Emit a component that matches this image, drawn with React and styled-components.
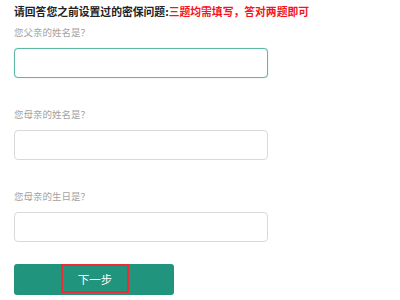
import React from "react";
import styled, { createGlobalStyle } from "styled-components";

const Global = createGlobalStyle`
  html, body { margin: 0; padding: 0; background: #fff; }
  body { font-family: "Noto Sans CJK SC", "Noto Sans", sans-serif; }
`;

const Page = styled.div`
  width: 400px;
  height: 300px;
  padding: 0 0 0 14px;
  box-sizing: border-box;
  overflow: hidden;
`;

const Title = styled.div`
  height: 22px;
  line-height: 22px;
  font-size: 10.8px;
  font-weight: 700;
  color: #222;
  white-space: nowrap;
`;

const Warn = styled.span`
  color: #f5161c;
  font-weight: 700;
`;

const Group = styled.div`
  margin-top: ${(p) => p.$gap}px;
  display: flex;
  flex-direction: column;
`;

const Label = styled.div`
  height: 20px;
  line-height: 20px;
  font-size: 9.5px;
  color: #a3a3a3;
  margin-bottom: 6px;
`;

const Field = styled.input`
  width: 254px;
  height: 30px;
  box-sizing: border-box;
  border-radius: 4px;
  border: 1px solid ${(p) => (p.$active ? "#5cb8a4" : "#d9d9d9")};
  box-shadow: ${(p) => (p.$active ? "0 0 1px rgba(60,170,145,0.5)" : "none")};
  outline: none;
  padding: 0 8px;
  font-size: 11px;
  background: #fff;
`;

const Button = styled.button`
  margin-top: 22px;
  width: 160px;
  height: 31px;
  border: none;
  border-radius: 3px;
  background: #21947e;
  color: #fff;
  font-family: "Noto Sans CJK SC", sans-serif;
  font-size: 11.5px;
  padding: 0 0 0 47px;
  display: flex;
  align-items: center;
`;

const Mark = styled.span`
  display: flex;
  align-items: center;
  justify-content: center;
  width: 68px;
  height: 29px;
  margin-top: -2px;
  box-sizing: border-box;
  border: 2px solid #ef2b35;
`;

const questions = [
  { label: "您父亲的姓名是？", gap: 0, active: true },
  { label: "您母亲的姓名是？", gap: 26 },
  { label: "您母亲的生日是？", gap: 26 },
];

export default function App() {
  return (
    <Page>
      <Global />
      <Title>
        请回答您之前设置过的密保问题:<Warn>三题均需填写，答对两题即可</Warn>
      </Title>
      {questions.map((q) => (
        <Group key={q.label} $gap={q.gap}>
          <Label>{q.label}</Label>
          <Field $active={q.active} />
        </Group>
      ))}
      <Button>
        <Mark>下一步</Mark>
      </Button>
    </Page>
  );
}
